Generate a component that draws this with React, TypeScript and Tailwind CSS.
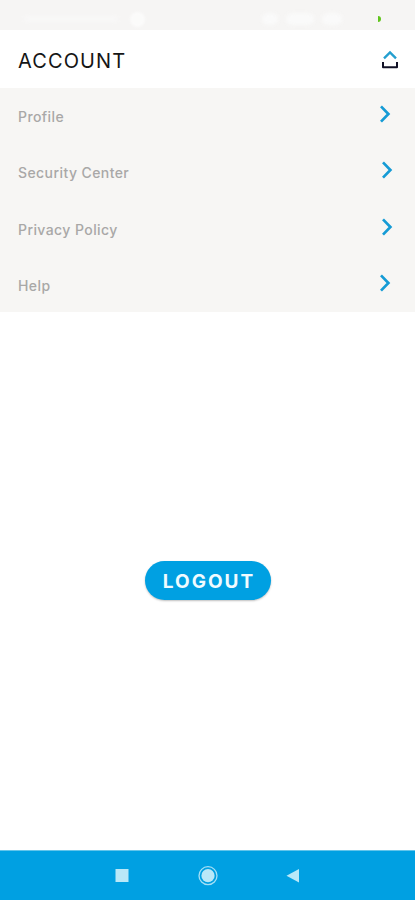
import clsx from 'clsx';

type MenuItem = {
  label: string;
  rowClass: string;
  arrowClass: string;
};

const menuItems: MenuItem[] = [
  { label: 'Profile', rowClass: 'h-[57px]', arrowClass: 'mr-6' },
  { label: 'Security Center', rowClass: 'h-[55px]', arrowClass: 'mr-[22px]' },
  { label: 'Privacy Policy', rowClass: 'h-[59px]', arrowClass: 'mr-[22px]' },
  { label: 'Help', rowClass: 'h-[53px]', arrowClass: 'mr-6' },
];

function StatusBar() {
  return (
    <div className="flex h-[30px] items-center justify-between bg-[#f6f5f4] pl-6 pr-4 pt-2">
      <div className="flex items-center gap-3 opacity-60">
        <div className="h-1.5 w-[94px] rounded-full bg-[#fafafa] blur-[2px]" />
        <div className="size-[15px] rounded-full bg-white blur-[1px]" />
      </div>
      <div className="flex items-center gap-2">
        <div className="h-3 w-4 rounded-full bg-[#fafafa] blur-[2px]" />
        <div className="h-3 w-7 rounded-full bg-[#fafafa] blur-[2px]" />
        <div className="mr-7 h-3 w-5 rounded-full bg-[#fafafa] blur-[2px]" />
        <div className="mr-[18px] h-1.5 w-[3px] rounded-r-sm bg-[#60c51c]" />
      </div>
    </div>
  );
}

function ShareIcon() {
  return (
    <svg width="18" height="20" viewBox="0 0 18 20" fill="none">
      <path d="M3 8.4 9 2.4l6 6" stroke="#249fcf" strokeWidth="2.3" />
      <path d="M2 12v5.2h14V12" stroke="#111126" strokeWidth="2" strokeLinejoin="round" />
    </svg>
  );
}

function Chevron({ className }: { className?: string }) {
  return (
    <svg className={className} width="12" height="18" viewBox="0 0 12 18" fill="none">
      <path d="M2 1.4 9.4 9 2 16.6" stroke="#159bd5" strokeWidth="2.7" />
    </svg>
  );
}

function NavBar() {
  return (
    <nav className="h-[50px] border-t border-[#63c5eb] bg-[#00a0e2]">
      <svg className="block" width="415" height="49" viewBox="0 0 415 49">
        <rect x="115.5" y="18" width="13" height="13" fill="#b9e8f8" />
        <circle cx="208" cy="24.7" r="9" fill="none" stroke="#a5dff5" strokeWidth="1.3" />
        <circle cx="208" cy="24.7" r="6.6" fill="#b9e8f8" />
        <path d="M286.5 24.7 299 18v13.4z" fill="#b9e8f8" />
      </svg>
    </nav>
  );
}

export default function App() {
  return (
    <div className="flex h-[900px] w-[415px] flex-col overflow-hidden bg-white font-['Inter',sans-serif]">
      <StatusBar />

      <header className="flex h-[58px] items-center justify-between pl-[18px] pr-4 pt-0.5">
        <h1 className="pt-0.5 text-[20px] leading-6 tracking-[1.1px] text-[#151515]">ACCOUNT</h1>
        <ShareIcon />
      </header>

      <ul className="h-56 bg-[#f7f6f4]">
        {menuItems.map((item) => (
          <li key={item.label} className={clsx('flex items-center justify-between pl-[18px]', item.rowClass)}>
            <span className="text-[14px] font-medium leading-5 tracking-[0.42px] text-[#a9a8a7]">{item.label}</span>
            <Chevron className={clsx('mb-[5px]', item.arrowClass)} />
          </li>
        ))}
      </ul>

      <main className="flex flex-1 flex-col items-center pt-[249px]">
        <button
          type="button"
          className="ml-px h-[39px] w-[126px] whitespace-nowrap rounded-full bg-[#00a0e2] pl-0.5 pt-[3px] text-[19px] font-bold leading-6 tracking-[2px] text-[#f0fbff] shadow-[0_1px_2px_rgba(0,0,0,0.25)]"
        >
          LOGOUT
        </button>
      </main>

      <NavBar />
    </div>
  );
}
